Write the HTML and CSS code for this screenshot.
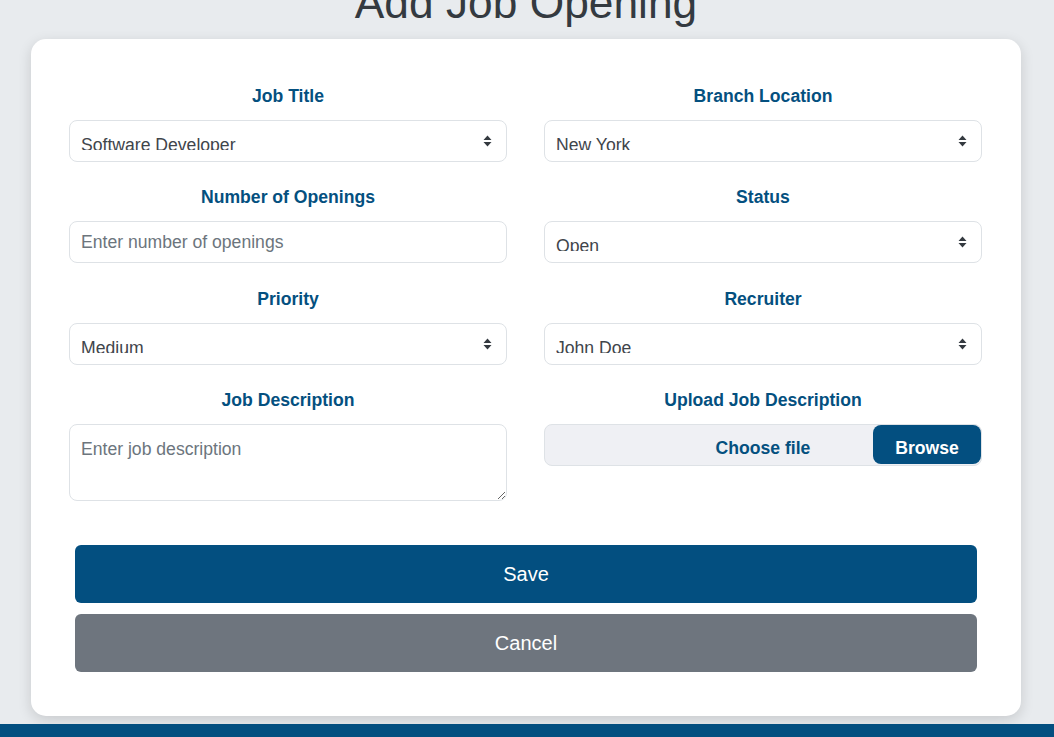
FILE: index.html
```html
<!DOCTYPE html>
<html lang="en">
<head>
<meta charset="utf-8">
<title>Add Job Opening</title>
<link rel="stylesheet" href="styles.css">
</head>
<body>
<div class="page">
  <h1 class="title">Add Job Opening</h1>
  <div class="card">
    <form class="grid">
      <div class="field">
        <label class="label">Job Title</label>
        <div class="select"><span class="select-text">Software Developer</span><svg class="arrows" width="9" height="12" viewBox="0 0 9 12"><path d="M4.5 0.5 L8.5 5 L0.5 5 Z M0.5 7 L8.5 7 L4.5 11.5 Z" fill="#343a40"/></svg></div>
      </div>
      <div class="field">
        <label class="label">Branch Location</label>
        <div class="select"><span class="select-text">New York</span><svg class="arrows" width="9" height="12" viewBox="0 0 9 12"><path d="M4.5 0.5 L8.5 5 L0.5 5 Z M0.5 7 L8.5 7 L4.5 11.5 Z" fill="#343a40"/></svg></div>
      </div>
      <div class="field">
        <label class="label">Number of Openings</label>
        <input class="input" type="text" placeholder="Enter number of openings">
      </div>
      <div class="field">
        <label class="label">Status</label>
        <div class="select"><span class="select-text">Open</span><svg class="arrows" width="9" height="12" viewBox="0 0 9 12"><path d="M4.5 0.5 L8.5 5 L0.5 5 Z M0.5 7 L8.5 7 L4.5 11.5 Z" fill="#343a40"/></svg></div>
      </div>
      <div class="field">
        <label class="label">Priority</label>
        <div class="select"><span class="select-text">Medium</span><svg class="arrows" width="9" height="12" viewBox="0 0 9 12"><path d="M4.5 0.5 L8.5 5 L0.5 5 Z M0.5 7 L8.5 7 L4.5 11.5 Z" fill="#343a40"/></svg></div>
      </div>
      <div class="field">
        <label class="label">Recruiter</label>
        <div class="select"><span class="select-text">John Doe</span><svg class="arrows" width="9" height="12" viewBox="0 0 9 12"><path d="M4.5 0.5 L8.5 5 L0.5 5 Z M0.5 7 L8.5 7 L4.5 11.5 Z" fill="#343a40"/></svg></div>
      </div>
      <div class="field">
        <label class="label">Job Description</label>
        <textarea class="textarea" placeholder="Enter job description"></textarea>
      </div>
      <div class="field">
        <label class="label">Upload Job Description</label>
        <div class="file">
          <span class="file-text">Choose file</span>
          <span class="browse">Browse</span>
        </div>
      </div>
    </form>
    <div class="actions">
      <button class="btn btn-save" type="button">Save</button>
      <button class="btn btn-cancel" type="button">Cancel</button>
    </div>
  </div>
</div>
<footer class="footer"></footer>
</body>
</html>
```

FILE: styles.css
```css
* { box-sizing: border-box; }
html, body { margin: 0; padding: 0; }
body {
  background: #e8ebee;
  font-family: "Liberation Sans", Arial, sans-serif;
  color: #212529;
  overflow: hidden;
}
.page {
  padding: 0 33px 0 31px;
}
.title {
  margin: -24px 0 10px;
  font-size: 44.3px;
  line-height: 53px;
  font-weight: 400;
  text-align: center;
  color: #343a40;
}
.card {
  background: #fff;
  border-radius: 15px;
  padding: 44px 39px 44px 38px;
  box-shadow: 0 4px 14px rgba(0, 0, 0, 0.14);
}
.grid {
  display: grid;
  grid-template-columns: 1fr 1fr;
  column-gap: 37px;
  row-gap: 22.4px;
  margin: 0;
}
.field {
  display: flex;
  flex-direction: column;
}
.label {
  display: block;
  text-align: center;
  font-size: 17.6px;
  line-height: 26px;
  font-weight: 700;
  color: #04507f;
  margin-bottom: 11px;
}
.select {
  position: relative;
  height: 42px;
  border: 1px solid #dee2e6;
  border-radius: 8px;
  background: #fff;
  padding: 0 11px;
}
.select-text {
  display: block;
  margin-top: 14px;
  height: 15px;
  overflow: hidden;
  font-size: 17.6px;
  line-height: 20px;
  color: #3f454b;
  white-space: nowrap;
}
.arrows {
  position: absolute;
  right: 14px;
  top: 14px;
}
.input {
  height: 42px;
  border: 1px solid #dee2e6;
  border-radius: 8px;
  padding: 0 11px;
  font-family: "Liberation Sans", Arial, sans-serif;
  font-size: 17.6px;
  color: #495057;
  background: #fff;
  outline: none;
}
.input::placeholder, .textarea::placeholder {
  color: #6c757d;
}
.textarea {
  height: 77px;
  border: 1px solid #dee2e6;
  border-radius: 8px;
  padding: 12px 11px;
  font-family: "Liberation Sans", Arial, sans-serif;
  font-size: 17.6px;
  line-height: 24px;
  color: #495057;
  resize: vertical;
  outline: none;
}
.file {
  display: grid;
  align-items: center;
  height: 42px;
  border: 1px solid #dee2e6;
  border-radius: 8px;
  background: #eff0f4;
}
.file-text, .browse {
  grid-area: 1 / 1;
  font-size: 17.6px;
  font-weight: 700;
}
.file-text {
  justify-self: center;
  color: #04507f;
  padding-top: 7px;
}
.browse {
  justify-self: end;
  align-self: start;
  width: 108px;
  height: 39px;
  padding-top: 13px;
  text-align: center;
  background: #034f80;
  color: #fff;
  border-radius: 8px;
  line-height: 20px;
}
.actions {
  display: flex;
  flex-direction: column;
  gap: 11px;
  margin: 44px 5px 0 6px;
}
.btn {
  height: 58px;
  border: none;
  border-radius: 6px;
  font-family: "Liberation Sans", Arial, sans-serif;
  font-size: 20px;
  color: #fff;
  cursor: pointer;
}
.btn-save { background: #034f80; }
.btn-cancel { background: #6e757e; }
.footer {
  margin-top: 8px;
  height: 40px;
  background: #034f80;
}
```
